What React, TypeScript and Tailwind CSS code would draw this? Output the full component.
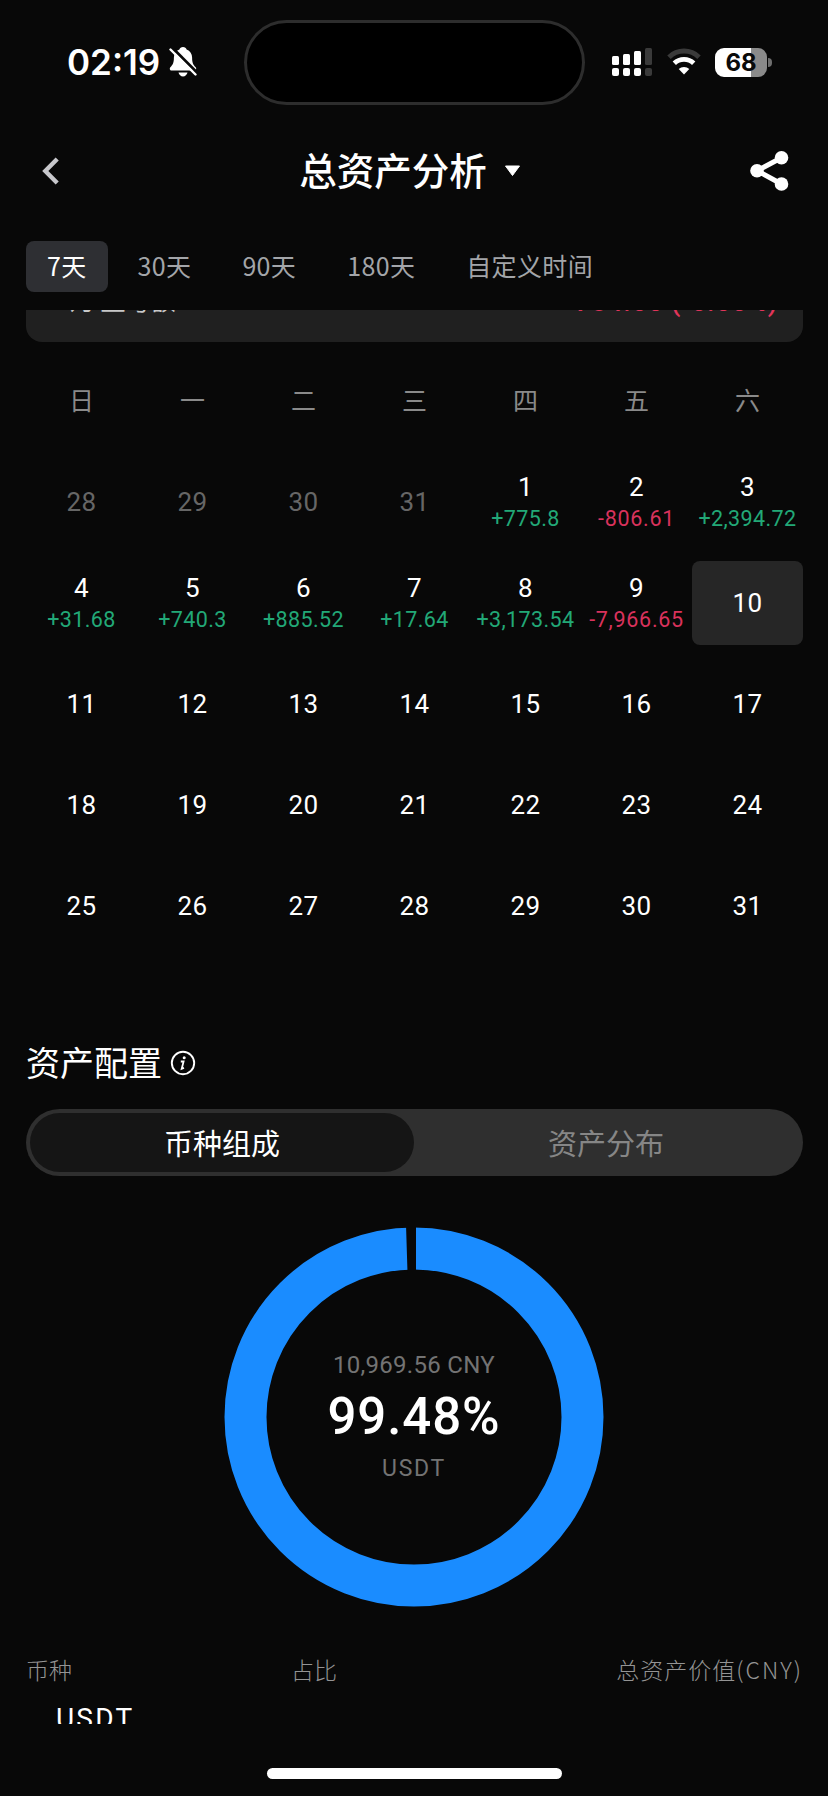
const NUM = "font-[Roboto,'Noto_Sans_CJK_SC',sans-serif]";

type Day = { d: number; pnl?: string; muted?: boolean; selected?: boolean };

const DAYS: Day[] = [
  { d: 28, muted: true },
  { d: 29, muted: true },
  { d: 30, muted: true },
  { d: 31, muted: true },
  { d: 1, pnl: "+775.8" },
  { d: 2, pnl: "-806.61" },
  { d: 3, pnl: "+2,394.72" },
  { d: 4, pnl: "+31.68" },
  { d: 5, pnl: "+740.3" },
  { d: 6, pnl: "+885.52" },
  { d: 7, pnl: "+17.64" },
  { d: 8, pnl: "+3,173.54" },
  { d: 9, pnl: "-7,966.65" },
  { d: 10, selected: true },
  ...Array.from({ length: 21 }, (_, i) => ({ d: i + 11 })),
];

const WEEKDAYS = ["日", "一", "二", "三", "四", "五", "六"];
const RANGES = ["7天", "30天", "90天", "180天", "自定义时间"];

function BellOff() {
  return (
    <svg width="28" height="32" viewBox="0 0 28 32" fill="none">
      <path
        d="M14 1c-1.9 0-3.2 1.1-3.6 2.6C6.800 5 4.900 8 4.900 11.500c0 5.500-1.200 7.300-3.300 9.500-1.500 1.600-.8 3.500 1 3.500h22.800c1.800 0 2.500-1.900 1-3.500-2.100-2.200-3.300-4-3.300-9.500 0-3.500-1.900-6.500-5.500-7.900C17.200 2.100 15.900 1 14 1z"
        fill="#fff"
      />
      <path d="M9.500 26.500h9c-.5 2.300-2.300 4-4.500 4s-4-1.700-4.500-4z" fill="#fff" />
      <path d="M3 1.500l26 26" stroke="#080808" strokeWidth="3" />
      <path d="M0 0h8L0 8z" fill="#080808" />
      <path d="M1.500 3.500l25 25" stroke="#fff" strokeWidth="2.400" strokeLinecap="round" />
    </svg>
  );
}

function Signal() {
  return (
    <svg width="41" height="30" viewBox="0 0 41 30" fill="#fff">
      <rect x="0" y="9" width="7" height="9" rx="1.500" />
      <rect x="11" y="7" width="7" height="11" rx="1.500" />
      <rect x="22" y="4" width="7" height="14" rx="1.500" />
      <rect x="0" y="21" width="7" height="8" rx="2" />
      <rect x="11" y="21" width="7" height="8" rx="2" />
      <rect x="22" y="21" width="7" height="8" rx="2" />
      <g fill="#3a3a3a">
        <rect x="33" y="1" width="7" height="17" rx="1.500" />
        <rect x="33" y="21" width="7" height="8" rx="2" />
      </g>
    </svg>
  );
}

function Wifi() {
  return (
    <svg width="34" height="28" viewBox="0 0 34 28" fill="none">
      <path d="M2 9.200a21.500 21.500 0 0 1 30 0" stroke="#3a3a3a" strokeWidth="5" />
      <path d="M7.300 15.200a14 14 0 0 1 19.400 0" stroke="#fff" strokeWidth="4.800" />
      <path d="M17 26.500l-5.300-5.400a7.600 7.600 0 0 1 10.600 0z" fill="#fff" />
    </svg>
  );
}

function StatusBar() {
  return (
    <div className="flex h-[124px] items-start">
      <div className="flex w-[244px] items-center pl-[67px] pt-[40px]">
        <span className="w-[102px] font-[Inter,sans-serif] text-[35px] font-semibold leading-[44px] text-white">
          02:19
        </span>
        <BellOff />
      </div>
      <div className="mt-[20px] h-[85px] w-[341px] rounded-full border-[3px] border-[#2d2d2d] bg-black" />
      <div className="flex items-center pl-[27px] pt-[47px]">
        <Signal />
        <div className="ml-[14px]">
          <Wifi />
        </div>
        <div className="ml-[14px] flex h-[29px] w-[52px] items-center justify-center rounded-[9px] bg-[linear-gradient(90deg,#fff_36px,#8a8a8a_36px)] pt-[1px] font-[Inter,sans-serif] text-[24px] font-bold text-[#0a0a0a]">
          68
        </div>
        <div className="ml-[1px] h-[9px] w-[4px] rounded-r-full bg-[#6e6e6e]" />
      </div>
    </div>
  );
}

function Header() {
  return (
    <div className="flex h-[94px] items-center justify-between pl-[42px] pr-[38px]">
      <svg width="18" height="30" viewBox="0 0 18 30" fill="none">
        <path d="M15.200 3L3.300 15l11.900 12" stroke="#c8c8cc" strokeWidth="4.400" />
      </svg>
      <div className="flex items-center pl-[10px]">
        <h1 className="pb-[4px] text-[37.500px] font-medium leading-[50px] text-white">总资产分析</h1>
        <svg className="ml-[17px]" width="17" height="12" viewBox="0 0 17 12">
          <path d="M1.500 1h14L8.500 10.500z" fill="#fff" stroke="#fff" strokeWidth="1" strokeLinejoin="round" />
        </svg>
      </div>
      <svg width="40" height="42" viewBox="0 0 40 42">
        <path d="M31.500 7.700L7 20.700l24.500 13.300" fill="none" stroke="#fff" strokeWidth="5" />
        <circle cx="31.500" cy="7.700" r="6.800" fill="#fff" />
        <circle cx="7" cy="20.700" r="6.800" fill="#fff" />
        <circle cx="31.500" cy="34" r="6.800" fill="#fff" />
      </svg>
    </div>
  );
}

function Calendar() {
  return (
    <div>
      <div className="grid grid-cols-7 pt-[39px] text-center text-[25px] leading-[36px] text-[#8a8a8a]">
        {WEEKDAYS.map((w) => (
          <span key={w}>{w}</span>
        ))}
      </div>
      <div className="mt-[43px] grid grid-cols-7 gap-y-[17px]">
        {DAYS.map((day, i) => (
          <div
            key={i}
            className={`${NUM} flex h-[84px] flex-col items-center justify-center whitespace-nowrap rounded-lg pt-[1px] ${
              day.selected ? "bg-[#262626]" : ""
            }`}
          >
            <span
              className={`text-[26px] leading-[31px] tracking-[0.3px] ${day.muted ? "text-[#666]" : "text-white"}`}
            >
              {day.d}
            </span>
            {day.pnl && (
              <span
                className={`text-[21.500px] leading-[31px] ${
                  day.pnl[0] === "+" ? "tracking-[0.4px] text-[#22a877]" : "tracking-[0.7px] text-[#d9325c]"
                }`}
              >
                {day.pnl}
              </span>
            )}
          </div>
        ))}
      </div>
    </div>
  );
}

function Donut() {
  return (
    <div className="ml-[198px] mt-[51px] grid h-[380px] w-[380px] place-items-center [&>*]:[grid-area:1/1]">
      <svg width="380" height="380" viewBox="0 0 380 380">
        <circle cx="190" cy="190" r="168.500" fill="none" stroke="#1a8cff" strokeWidth="42" />
        <path d="M182 -2h10v48h-8.500z" fill="#080808" />
      </svg>
      <div className={`${NUM} flex flex-col items-center pb-[1px]`}>
        <span className="text-[24px] leading-[36px] tracking-[0.3px] text-[#737373]">10,969.56 CNY</span>
        <span className="mt-[4px] text-[51px] font-medium leading-[60px] tracking-[0.9px] text-white">99.48%</span>
        <span className="mt-[4px] text-[23px] leading-[36px] tracking-[1.700px] text-[#737373]">USDT</span>
      </div>
    </div>
  );
}

export default function App() {
  return (
    <div className="flex h-[1796px] w-[828px] flex-col overflow-hidden bg-[#080808] font-['Noto_Sans_CJK_SC',sans-serif]">
      <StatusBar />
      <Header />
      <div className="flex h-[92px] items-start gap-[9px] pl-[26px] pt-[23px]">
        {RANGES.map((r, i) => (
          <div
            key={r}
            className={`flex h-[51px] items-center rounded-lg px-[21px] pb-[4px] text-[25px] leading-[36px] tracking-[0.35px] ${
              i === 0 ? "bg-[#2e2f33] text-white" : "text-[#a3a5a9]"
            }`}
          >
            {r}
          </div>
        ))}
      </div>
      <div className="h-[1414px] overflow-hidden pl-[26px] pr-[25px]">
        <div className="-mt-[60px] flex h-[92px] items-end justify-between rounded-2xl bg-[#202020] pb-[23px] pl-[30px] pr-[25px]">
          <span className="pb-[2px] text-[25px] leading-[36px] text-[#c8c8c8]">1月 盈亏额</span>
          <span className={`${NUM} text-[27px] font-medium leading-[34px] tracking-[0.7px] text-[#e0355a]`}>
            -784.65 (-6.65%)
          </span>
        </div>
        <Calendar />
        <div className="mt-[92px] flex items-center">
          <h2 className="text-[34px] leading-[44px] text-white">资产配置</h2>
          <svg className="ml-[8px] mt-[1px]" width="26" height="26" viewBox="0 0 26 26">
            <circle cx="13" cy="13" r="11.200" fill="none" stroke="#fff" strokeWidth="1.900" />
            <circle cx="14.200" cy="7.700" r="1.500" fill="#fff" />
            <path d="M10.800 11.500h2.800l-1.900 7.300 2.300-.9" fill="none" stroke="#fff" strokeWidth="1.800" />
          </svg>
        </div>
        <div className="mt-[25px] grid h-[67px] grid-cols-2 rounded-full bg-[#2f2f2f] py-[4px] pl-[4px] pr-[5px] text-center text-[29px] leading-[58px]">
          <div className="rounded-full bg-[#151515] text-white">币种组成</div>
          <div className="text-[#868686]">资产分布</div>
        </div>
        <Donut />
        <div className="mt-[44px] flex text-[23px] font-light leading-[36px] text-[#949494]">
          <span className="w-[265px]">币种</span>
          <span>占比</span>
          <span className="ml-auto tracking-[1px]">
            总资产价值<span className="tracking-[2px]">(CNY)</span>
          </span>
        </div>
        <div className={`${NUM} pl-[30px] pt-[14px] text-[28px] leading-[36px] tracking-[2.200px] text-white`}>USDT</div>
      </div>
      <div className="mx-auto mt-[44px] h-[11px] w-[295px] rounded-full bg-white" />
    </div>
  );
}
